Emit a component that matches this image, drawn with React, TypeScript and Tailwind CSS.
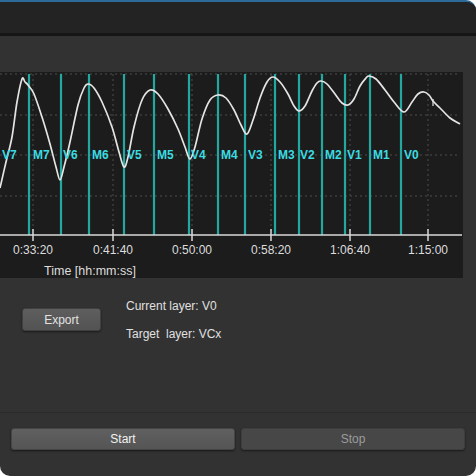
import React from "react";

const pts: [number, number][] = [
  [0, 186], [6, 160], [12, 135], [17, 100], [22, 77], [25, 80], [28, 83], [34, 92], [42, 115], [50, 142], [56, 165], [60, 178],
  [64, 165], [70, 140], [78, 103], [84, 86], [88, 82], [94, 86], [102, 100], [112, 125], [119, 150], [124, 165],
  [128, 155], [134, 125], [142, 98], [150, 88], [158, 92], [168, 107], [178, 127], [185, 145], [190, 157],
  [195, 145], [202, 117], [210, 98], [218, 93], [226, 96], [234, 108], [241, 123], [247, 132],
  [253, 118], [260, 96], [267, 80], [273, 75], [280, 80], [288, 92], [294, 104], [299, 109],
  [305, 104], [312, 89], [317, 81], [321, 79], [327, 82], [335, 92], [342, 101], [348, 103],
  [354, 97], [360, 84], [366, 76], [369, 74], [376, 77], [385, 88], [394, 100], [404, 110],
  [412, 100], [418, 92], [424, 90], [429, 93], [433, 99], [440, 106], [450, 116], [460, 122],
];

function smoothPath(p: [number, number][], dy: number): string {
  const q = p.map(([x, y]) => [x, y - dy] as [number, number]);
  let d = `M${q[0][0]},${q[0][1]}`;
  for (let i = 0; i < q.length - 1; i++) {
    const p0 = q[i - 1] || q[i];
    const p1 = q[i];
    const p2 = q[i + 1];
    const p3 = q[i + 2] || p2;
    const c1x = p1[0] + (p2[0] - p0[0]) / 6;
    const c1y = p1[1] + (p2[1] - p0[1]) / 6;
    const c2x = p2[0] - (p3[0] - p1[0]) / 6;
    const c2y = p2[1] - (p3[1] - p1[1]) / 6;
    d += ` C${c1x.toFixed(1)},${c1y.toFixed(1)} ${c2x.toFixed(1)},${c2y.toFixed(1)} ${p2[0]},${p2[1]}`;
  }
  return d;
}

const teal = [29, 61, 89, 124, 154, 189, 218, 245, 275, 299, 322, 345, 370, 401];
const labels: [string, number][] = [
  ["V7", 2], ["M7", 33], ["V6", 63], ["M6", 92], ["V5", 127], ["M5", 157], ["V4", 191], ["M4", 221],
  ["V3", 248], ["M3", 278], ["V2", 300], ["M2", 325], ["V1", 347], ["M1", 373], ["V0", 404],
];
const ticks: [number, string][] = [
  [33, "0:33:20"], [113, "0:41:40"], [192, "0:50:00"], [271, "0:58:20"], [350, "1:06:40"], [428, "1:15:00"],
];

function Chart() {
  const font = "'Liberation Sans', Arial, sans-serif";
  return (
    <svg width={463} height={206} viewBox="0 0 463 206" className="block">
      <rect x={0} y={0} width={463} height={206} fill="#1c1c1c" />
      {[2, 43, 83, 124].map((y) => (
        <line key={y} x1={0} x2={460} y1={y} y2={y} stroke="#4c4c4c" strokeWidth={1} strokeDasharray="2 3" />
      ))}
      {ticks.map(([x]) => (
        <line key={x} x1={x} x2={x} y1={2} y2={163} stroke="#4c4c4c" strokeWidth={1} strokeDasharray="2 3" />
      ))}
      {teal.map((x) => (
        <line key={x} x1={x} x2={x} y1={2} y2={163} stroke="#22a89e" strokeWidth={2.2} />
      ))}
      <path d={smoothPath(pts, 70)} fill="none" stroke="#e4e4e4" strokeWidth={1.7} strokeLinejoin="round" />
      <line x1={433} x2={433} y1={27} y2={34} stroke="#e4e4e4" strokeWidth={1.2} />
      {labels.map(([t, x]) => (
        <text key={t} x={x} y={87} fill="#3adbe2" fontFamily={font} fontWeight={700} fontSize={12}>
          {t}
        </text>
      ))}
      <line x1={0} x2={462} y1={163} y2={163} stroke="#d8d8d8" strokeWidth={1.5} />
      {ticks.map(([x, t]) => (
        <g key={t}>
          <line x1={x} x2={x} y1={157} y2={169} stroke="#d8d8d8" strokeWidth={1.5} />
          <text x={x} y={182} textAnchor="middle" fill="#dddddd" fontFamily={font} fontSize={12}>
            {t}
          </text>
        </g>
      ))}
      <text x={90} y={203} textAnchor="middle" fill="#dddddd" fontFamily={font} fontSize={12.5}>
        Time [hh:mm:ss]
      </text>
    </svg>
  );
}

export default function App() {
  return (
    <div className="w-[476px] h-[476px] bg-white font-['Liberation_Sans',Arial,sans-serif]">
      <div className="w-full h-full flex flex-col bg-[#323232] rounded-tr-[10px] rounded-b-[10px] overflow-hidden border-t-2 border-[#2c6a99]">
        <div className="h-[31px] bg-[#232323] shrink-0" />
        <div className="h-[3px] bg-[#161616] shrink-0" />
        <div className="mt-[36px] shrink-0">
          <Chart />
        </div>
        <div className="mt-[20px] flex items-start shrink-0">
          <button className="ml-[22px] mt-[10px] w-[79px] h-[23px] rounded-[3px] bg-gradient-to-b from-[#5e5e5e] to-[#535353] border border-[#404040] shadow-[0_1px_2px_rgba(0,0,0,0.5)] text-[12px] text-[#e2e2e2]">
            Export
          </button>
          <div className="ml-[25px] flex flex-col gap-[12px] text-[12px] leading-[16px] text-[#e0e0e0]">
            <span>Current layer: V0</span>
            <span className="whitespace-pre">Target  layer: VCx</span>
          </div>
        </div>
        <div className="mt-[70px] h-px bg-[#2c2c2c] shrink-0" />
        <div className="mt-[15px] px-[11px] flex gap-[6px] shrink-0">
          <button className="flex-1 h-[22px] rounded-[3px] bg-gradient-to-b from-[#606060] to-[#555555] border border-[#454545] shadow-[0_1px_2px_rgba(0,0,0,0.55)] text-[12px] text-[#f2f2f2]">
            Start
          </button>
          <button className="flex-1 h-[22px] rounded-[3px] bg-[#474747] border border-[#3e3e3e] shadow-[0_1px_2px_rgba(0,0,0,0.5)] text-[12px] text-[#9c9c9c]">
            Stop
          </button>
        </div>
      </div>
    </div>
  );
}
